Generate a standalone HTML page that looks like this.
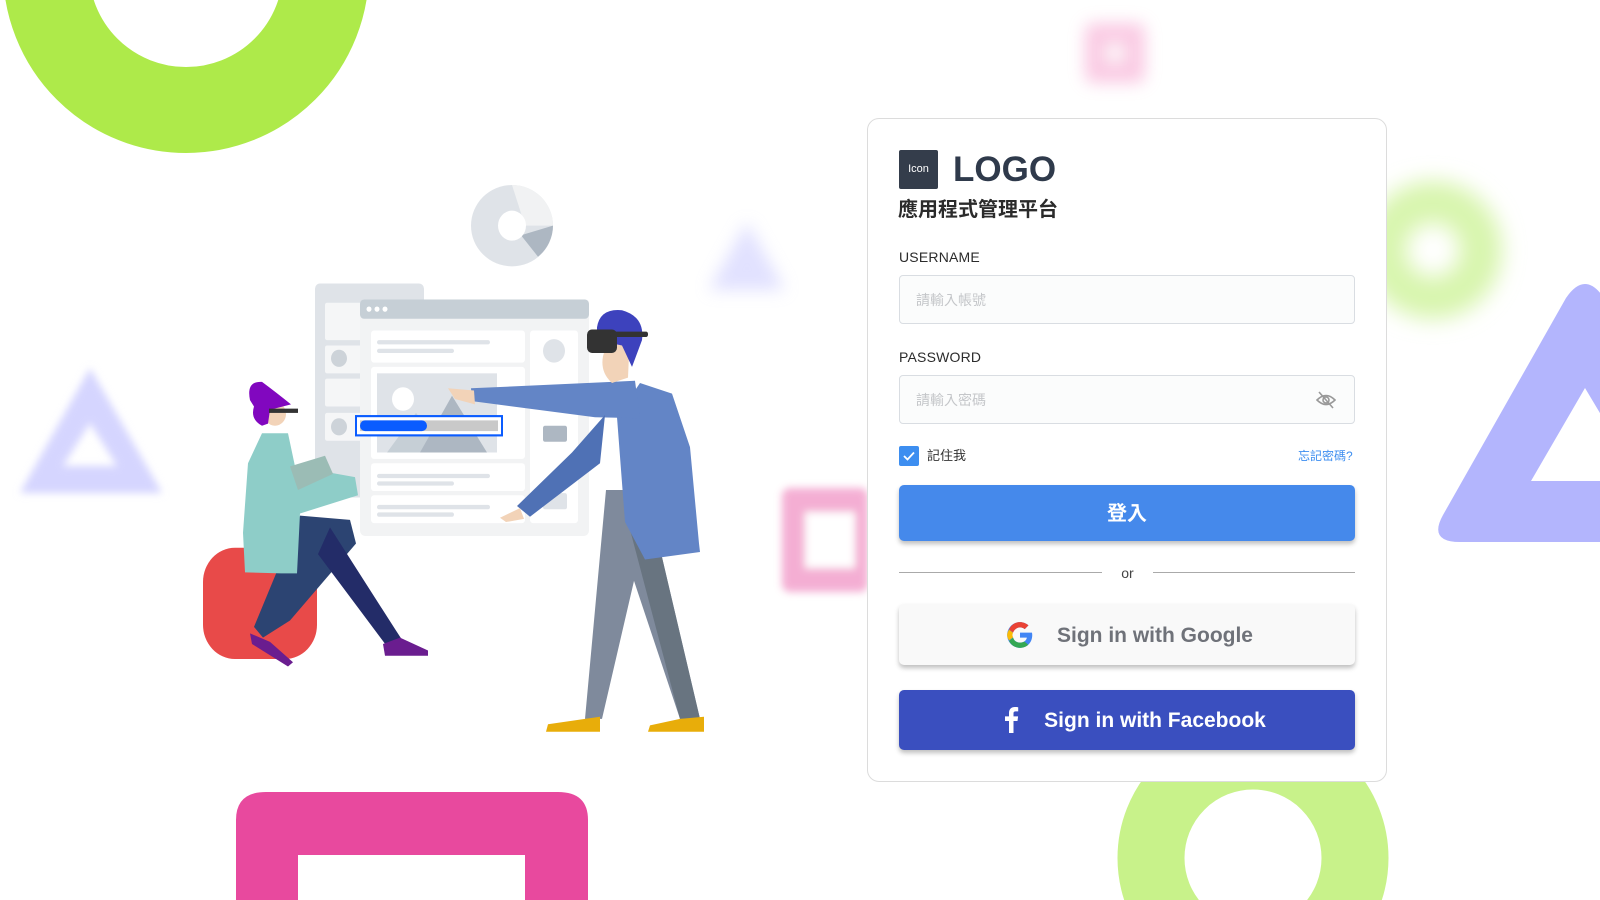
<!DOCTYPE html>
<html><head><meta charset="utf-8"><style>
*{margin:0;padding:0;box-sizing:border-box}
html,body{width:1600px;height:900px;overflow:hidden}
body{background:#fff;position:relative;font-family:"Liberation Sans","Noto Sans CJK TC",sans-serif}
.abs{position:absolute}
.card{left:867px;top:118px;width:520px;height:664px;border:1px solid #dcdcdc;border-radius:12px;background:#fff}
.in{position:absolute;left:899px;width:456px;height:49px;border:1px solid #d9dde2;border-radius:4px;background:#fbfcfc;font-size:14px;color:#c4c6c9;padding:15px 16px;line-height:18px}
.lbl{position:absolute;left:899px;font-size:14px;color:#2b2b2b;letter-spacing:.2px}
.btn{position:absolute;left:899px;width:456px;border-radius:5px;box-shadow:0 3px 5px rgba(0,0,0,.25);text-align:center}
</style></head><body>
<svg class="abs" style="left:0;top:0" width="1600" height="900">
<defs>
<filter id="b4" x="-50%" y="-50%" width="200%" height="200%"><feGaussianBlur stdDeviation="4"/></filter>
<filter id="b8" x="-50%" y="-50%" width="200%" height="200%"><feGaussianBlur stdDeviation="8"/></filter>
<filter id="b11" x="-50%" y="-50%" width="200%" height="200%"><feGaussianBlur stdDeviation="11"/></filter>
</defs>
<circle cx="186" cy="-30" r="140" fill="none" stroke="#aeea4a" stroke-width="86"/>
<g filter="url(#b8)" opacity=".6"><rect x="1085" y="23" width="60" height="60" rx="8" fill="#f7a8d2"/><rect x="1107" y="45" width="16" height="16" fill="#fff"/></g>
<g filter="url(#b8)" opacity=".55"><path d="M747 222 L785 290 L709 290Z" fill="#c9c9ff"/></g>
<g filter="url(#b4)"><path d="M90 368 L162 493 L20 493Z M90 423 L63 466 L117 466Z" fill-rule="evenodd" fill="#d5d5ff"/></g>
<g filter="url(#b11)"><circle cx="1433" cy="250" r="48" fill="none" stroke="#d8f5ae" stroke-width="42"/></g>
<path d="M1566 298 Q1585 270 1604 298 L1640 360 L1640 542 L1460 542 Q1428 542 1443 515 Z M1585 388 L1531 481 L1640 481 L1640 480Z" fill-rule="evenodd" fill="#b3b5fd"/>
<g filter="url(#b4)" opacity=".8"><rect x="782" y="488" width="86" height="104" rx="8" fill="#f29bc9"/><rect x="805" y="512" width="50" height="56" fill="#fff"/></g>
<path d="M236 820 Q236 792 266 792 L558 792 Q588 792 588 820 L588 900 L525 900 L525 855 L298 855 L298 900 L236 900Z" fill="#e8499e"/>
<circle cx="1253" cy="858" r="102" fill="none" stroke="#c8f28a" stroke-width="67"/>

<g transform="translate(0,185) scale(1,1.07) translate(0,-185)">
<ellipse cx="512" cy="223" rx="41" ry="38" fill="#dfe3e8"/>
<path d="M512 185 A41 38 0 0 1 553 223 L525 223 Z" fill="#f1f2f3"/>
<path d="M553 223 A41 38 0 0 1 538 252 L521 232 Z" fill="#adb7c2"/>
<circle cx="512" cy="223" r="14" fill="#fff"/>
<rect x="315" y="277" width="109" height="200" rx="5" fill="#dfe3e8"/>
<rect x="325" y="295" width="45" height="35" rx="2" fill="#f5f6f7"/>
<rect x="325" y="335" width="45" height="26" rx="2" fill="#f5f6f7"/>
<rect x="325" y="366" width="45" height="26" rx="2" fill="#f5f6f7"/>
<rect x="325" y="398" width="45" height="26" rx="2" fill="#f5f6f7"/>
<circle cx="339" cy="347" r="8" fill="#cdd3d9"/><circle cx="339" cy="411" r="8" fill="#cdd3d9"/>
<rect x="360" y="292" width="229" height="221" rx="5" fill="#f2f3f4"/>
<rect x="360" y="292" width="229" height="18" rx="4" fill="#c6cfd6"/>
<circle cx="369" cy="301" r="2.5" fill="#fff"/><circle cx="377" cy="301" r="2.5" fill="#fff"/><circle cx="385" cy="301" r="2.5" fill="#fff"/>
<rect x="371" y="321" width="154" height="30" rx="3" fill="#fff"/>
<rect x="371" y="355" width="154" height="80" rx="3" fill="#fff"/>
<rect x="371" y="415" width="154" height="26" rx="3" fill="#fff"/>
<rect x="371" y="445" width="154" height="26" rx="3" fill="#fff"/>
<rect x="371" y="475" width="154" height="26" rx="3" fill="#fff"/>
<rect x="530" y="321" width="48" height="180" rx="3" fill="#fff"/>
<circle cx="554" cy="340" r="11" fill="#dfe3e8"/>
<rect x="543" y="410" width="24" height="15" rx="2" fill="#adb7c2"/>
<rect x="543" y="473" width="24" height="15" rx="2" fill="#dfe3e8"/>
<rect x="377" y="330" width="113" height="4" rx="2" fill="#dfe3e8"/><rect x="377" y="338" width="77" height="4" rx="2" fill="#dfe3e8"/>
<rect x="377" y="455" width="113" height="4" rx="2" fill="#dfe3e8"/><rect x="377" y="462" width="77" height="4" rx="2" fill="#dfe3e8"/>
<rect x="377" y="484" width="113" height="4" rx="2" fill="#dfe3e8"/><rect x="377" y="491" width="77" height="4" rx="2" fill="#dfe3e8"/>
<rect x="377" y="361" width="120" height="74" fill="#dfe3e8"/>
<circle cx="403" cy="385" r="11" fill="#fff"/>
<path d="M387 435 L416 398 L445 435Z" fill="#c6cfd6"/><path d="M420 435 L452 382 L487 435Z" fill="#adb7c2"/>
<rect x="356" y="401" width="146" height="18" fill="#fff" stroke="#0a5cff" stroke-width="2"/>
<rect x="360" y="405" width="138" height="10" fill="#c9c9c9"/>
<rect x="360" y="405" width="67" height="10" rx="5" fill="#0a5cff"/>
<rect x="203" y="524" width="114" height="104" rx="32" fill="#e84a49"/>
<path d="M300 494 L350 498 L356 520 L290 592 L263 608 L254 598 Z" fill="#2c4472"/>
<path d="M330 505 L395 600 L402 610 L386 615 L318 530 Z" fill="#232c68"/>
<path d="M250 604 L270 612 L293 631 L288 635 L252 614Z" fill="#6a1d8f"/>
<path d="M383 614 L400 608 L428 620 L428 625 L385 625Z" fill="#6a1d8f"/>
<path d="M262 417 L288 417 L295 448 L355 458 L358 475 L300 492 L297 548 L281 548 L245 547 L243 510 L248 445 Z" fill="#8ecdc8"/>
<path d="M290 448 L325 438 L333 455 L298 470Z" fill="#9bbcb5"/>
<circle cx="275" cy="399" r="11" fill="#f2d3b8"/>
<path d="M250 386 Q246 368 262 369 Q275 378 291 390 L270 395 L268 408 L262 410 Q250 404 254 392 Z" fill="#8107bf"/>
<rect x="269" y="394" width="29" height="4" fill="#333"/>
<path d="M606 470 L650 470 L660 525 L700 684 L680 684 L634 555 L602 684 L585 684 Z" fill="#7f8a9c"/>
<path d="M628 500 L660 525 L700 684 L680 684 Z" fill="#687480"/>
<path d="M585 684 L600 682 L600 696 L546 696 L548 689Z" fill="#e8ad0a"/>
<path d="M680 684 L704 682 L704 696 L648 696 L650 690Z" fill="#e8ad0a"/>
<path d="M640 370 L672 380 L690 430 L699 520 L700 528 L645 535 L625 500 L617 402 Z" fill="#6385c6"/>
<path d="M471 375 L635 368 L640 403 L595 402 L472 387Z" fill="#6385c6"/>
<path d="M605 400 L600 445 L530 495 L517 485 L572 435 Z" fill="#4f71b5"/>
<path d="M448 375 L474 377 L475 390 L455 385Z" fill="#f2d3b8"/>
<path d="M500 496 L520 487 L524 497 L506 500Z" fill="#f2d3b8"/>
<path d="M610 322 L630 322 L628 365 L612 370 Q600 360 603 345Z" fill="#f2d3b8"/>
<path d="M597 318 Q600 300 622 302 Q645 308 642 330 L632 355 L622 335 L597 330Z" fill="#3d42bd"/>
<rect x="587" y="320" width="30" height="22" rx="5" fill="#333"/><rect x="610" y="322" width="38" height="5" rx="2" fill="#333"/>
</g>
</svg>

<div class="abs card"></div>
<div class="abs" style="left:899px;top:150px;width:39px;height:39px;background:#343d4b;border-radius:2px;color:#fff;font-size:11px;text-align:center;line-height:39px">Icon</div>
<div class="abs" style="left:953px;top:146px;font-size:35px;font-weight:bold;color:#2f3a4b;line-height:48px">LOGO</div>
<div class="abs" style="left:898px;top:196px;font-size:20px;font-weight:bold;color:#2b2b2b;line-height:28px">應用程式管理平台</div>
<div class="lbl" style="top:249px">USERNAME</div>
<div class="in" style="top:275px">請輸入帳號</div>
<div class="lbl" style="top:349px">PASSWORD</div>
<div class="in" style="top:375px">請輸入密碼</div>
<svg class="abs" style="left:1316px;top:391px" width="20" height="18" viewBox="0 0 20 18"><path d="M1 9 Q10 0 19 9 Q10 18 1 9Z" fill="none" stroke="#999" stroke-width="1.6"/><circle cx="10" cy="9" r="3" fill="none" stroke="#999" stroke-width="1.6"/><path d="M3 1 L17 17" stroke="#999" stroke-width="1.6"/></svg>
<div class="abs" style="left:899px;top:446px;width:20px;height:20px;background:#3d8ef0;border-radius:2px"></div>
<svg class="abs" style="left:899px;top:446px" width="20" height="20"><path d="M5 10 L8.5 13.5 L15 6.5" fill="none" stroke="#fff" stroke-width="1.8"/></svg>
<div class="abs" style="left:927px;top:446px;font-size:13px;color:#333;line-height:20px">記住我</div>
<div class="abs" style="left:1298px;top:446px;font-size:12px;color:#3d8ef0;line-height:20px">忘記密碼?</div>
<div class="btn" style="top:485px;height:56px;background:#4589eb;color:#fff;font-size:20px;font-weight:bold;line-height:58px">登入</div>
<div class="abs" style="left:899px;top:572px;width:203px;height:1px;background:#aaa"></div>
<div class="abs" style="left:1153px;top:572px;width:202px;height:1px;background:#aaa"></div>
<div class="abs" style="left:1102px;top:564px;width:51px;text-align:center;font-size:14px;color:#444;line-height:18px">or</div>
<div class="btn" style="top:604px;height:61px;background:#f9f9f9;color:#6f7279;font-size:21px;font-weight:bold;line-height:63px"><span style="padding-left:56px">Sign in with Google</span></div>
<svg class="abs" style="left:1006px;top:621px" width="28" height="28" viewBox="0 0 48 48"><path d="M44.5 20H24v8.5h11.8C34.7 33.9 30.1 37 24 37c-7.2 0-13-5.8-13-13s5.8-13 13-13c3.1 0 5.9 1.1 8.1 2.9l6.4-6.4C34.6 4.1 29.6 2 24 2 11.8 2 2 11.8 2 24s9.8 22 22 22c11 0 21-8 21-22 0-1.3-.2-2.7-.5-4z" fill="#4285f4"/><path d="M5.3 14.7l7 5.1C14.1 15.1 18.7 11 24 11c3.1 0 5.9 1.1 8.1 2.9l6.4-6.4C34.6 4.1 29.6 2 24 2 15.4 2 8.1 7.3 5.3 14.7z" fill="#ea4335"/><path d="M24 46c5.5 0 10.4-1.9 14.1-5.3l-6.6-5.5C29.5 36.7 26.9 37 24 37c-6 0-10.6-3.1-11.7-8.4l-7 5.4C8 40.5 15.4 46 24 46z" fill="#34a853"/><path d="M5.3 33.3l7-5.4C11.5 26.7 11 25.4 11 24s.4-2.7 1.1-3.9l-7-5.3C3.8 17.5 2 20.7 2 24s1.3 6.6 3.3 9.3z" fill="#fbbc05"/></svg>
<div class="btn" style="top:690px;height:60px;background:#3a4fbf;color:#fff;font-size:21px;font-weight:bold;line-height:62px"><span style="padding-left:56px">Sign in with Facebook</span></div>
<svg class="abs" style="left:1003px;top:707px" width="16" height="26" viewBox="0 0 16 26"><path d="M10.5 26V14h4l.6-4.6h-4.6V6.6c0-1.3.4-2.2 2.3-2.2h2.4V.3C14.8.2 13.4 0 11.8 0 8.4 0 6 2.1 6 5.9v3.5H2V14h4v12z" fill="#fff"/></svg>
</body></html>
